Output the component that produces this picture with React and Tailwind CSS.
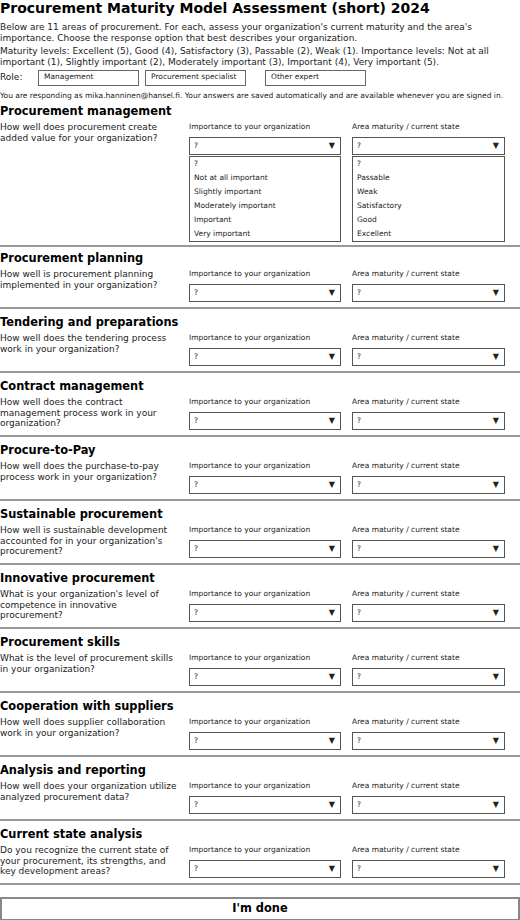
import React, { useState } from "react";

const IMPORTANCE = [
  "?",
  "Not at all important",
  "Slightly important",
  "Moderately important",
  "Important",
  "Very important",
];

const MATURITY = ["?", "Passable", "Weak", "Satisfactory", "Good", "Excellent"];

const AREAS = [
  {
    title: "Procurement management",
    question: "How well does procurement create added value for your organization?",
  },
  {
    title: "Procurement planning",
    question: "How well is procurement planning implemented in your organization?",
  },
  {
    title: "Tendering and preparations",
    question: "How well does the tendering process work in your organization?",
  },
  {
    title: "Contract management",
    question: "How well does the contract management process work in your organization?",
  },
  {
    title: "Procure-to-Pay",
    question: "How well does the purchase-to-pay process work in your organization?",
  },
  {
    title: "Sustainable procurement",
    question: "How well is sustainable development accounted for in your organization's procurement?",
  },
  {
    title: "Innovative procurement",
    question: "What is your organization's level of competence in innovative procurement?",
  },
  {
    title: "Procurement skills",
    question: "What is the level of procurement skills in your organization?",
  },
  {
    title: "Cooperation with suppliers",
    question: "How well does supplier collaboration work in your organization?",
  },
  {
    title: "Analysis and reporting",
    question: "How well does your organization utilize analyzed procurement data?",
  },
  {
    title: "Current state analysis",
    question:
      "Do you recognize the current state of your procurement, its strengths, and key development areas?",
  },
];

// fake select: closed box + optional open list under it
const Picker = ({ label, options, open }) => (
  <div className="flex flex-col">
    <div className="text-[7.5px] leading-[12px] text-[#222] mb-[4px]">{label}</div>
    <div className="h-[18px] border border-[#555] bg-white flex items-center justify-between pl-[4px] pr-[5px] text-[7.5px] text-[#222]">
      <span>?</span>
      <span className="text-[8px] leading-none">▼</span>
    </div>
    {open && (
      <div className="mt-px border border-[#555] bg-white">
        {options.map((o) => (
          <div key={o} className="pl-[4px] text-[7.5px] leading-[14px] text-[#222]">
            {o}
          </div>
        ))}
      </div>
    )}
  </div>
);

const Area = ({ area, open, pad }) => (
  <section className={`border-b-2 border-[#999] ${pad}`}>
    <h2 className="text-[11.4px] leading-[16px] font-bold text-black">{area.title}</h2>
    <div className="flex mt-[2px]">
      <p className="w-[180px] mr-[9px] text-[9px] leading-[10.5px] text-[#222] pt-px">
        {area.question}
      </p>
      <div className="w-[152px]">
        <Picker label="Importance to your organization" options={IMPORTANCE} open={open} />
      </div>
      <div className="w-[153px] ml-[11px]">
        <Picker label="Area maturity / current state" options={MATURITY} open={open} />
      </div>
    </div>
  </section>
);

const RoleBox = ({ label, className }) => (
  <div
    className={`h-[16px] w-[101px] border border-[#666] bg-white pl-[5px] text-[7.5px] leading-[11px] text-[#222] ${className}`}
  >
    {label}
  </div>
);

export default function App() {
  const [done, setDone] = useState(false);

  const padFor = (i) => {
    if (i === 0) return "pt-px pb-[3px]";
    if (i === 1) return "pt-[3px] pb-[5px]";
    return "pt-[5px] pb-[5px]";
  };

  return (
    <div
      className="w-[520px] bg-white text-black"
      style={{ fontFamily: '"DejaVu Sans", Verdana, sans-serif' }}
    >
      <h1 className="text-[14px] leading-[16px] font-bold">
        Procurement Maturity Model Assessment (short) 2024
      </h1>
      <p className="mt-[6px] text-[9px] leading-[11px] text-[#222]">
        Below are 11 areas of procurement. For each, assess your organization's current maturity
        and the area's importance. Choose the response option that best describes your
        organization.
      </p>
      <p className="mt-[2px] text-[9px] leading-[11px] text-[#222]">
        Maturity levels: Excellent (5), Good (4), Satisfactory (3), Passable (2), Weak (1).
        Importance levels: Not at all important (1), Slightly important (2), Moderately important
        (3), Important (4), Very important (5).
      </p>

      {/* role picker */}
      <div className="mt-[2px] flex items-center">
        <span className="w-[38px] text-[9px] text-[#222]">Role:</span>
        <RoleBox label="Management" />
        <RoleBox label="Procurement specialist" className="ml-[6px]" />
        <RoleBox label="Other expert" className="ml-[19px] w-[100px]" />
      </div>

      <p className="mt-[4px] text-[7.5px] leading-[11px] text-[#222]">
        You are responding as mika.hanninen@hansel.fi. Your answers are saved automatically and
        are available whenever you are signed in.
      </p>

      <div className="mt-px">
        {AREAS.map((a, i) => (
          <Area key={a.title} area={a} open={i === 0} pad={padFor(i)} />
        ))}
      </div>

      <button
        onClick={() => setDone(true)}
        className="mt-[12px] w-full h-[24px] border-2 border-[#888] bg-white text-[11.4px] font-bold text-black"
      >
        {done ? "I'm done" : "I'm done"}
      </button>
    </div>
  );
}
